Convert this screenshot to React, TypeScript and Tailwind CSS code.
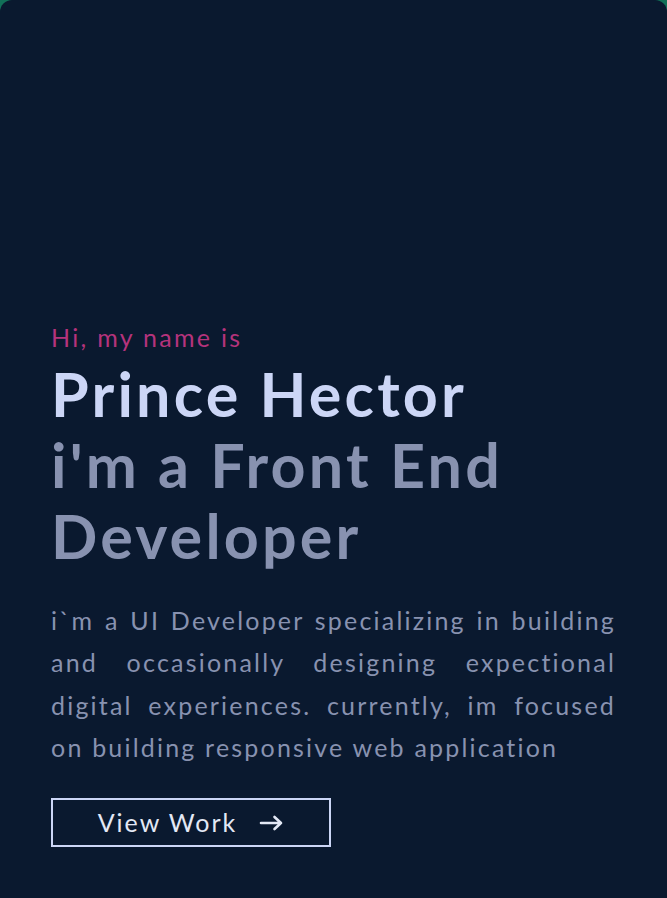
const bio = [
  "i`m a UI Developer specializing in building",
  "and occasionally designing expectional",
  "digital experiences. currently, im focused",
];

export default function App() {
  return (
    <div className="min-h-screen bg-[#127058]">
      <section
        className="min-h-screen rounded-t-[12px] bg-[#0a192f] px-[51px] pt-[320px] pb-[52px]"
        style={{ fontFamily: "Lato, 'Open Sans', sans-serif" }}
      >
        {/* Intro */}
        <p className="text-[25px] leading-[34px] tracking-[2.3px] text-[#b5337c]">Hi, my name is</p>
        <h1 className="mt-[4px] text-[61px] font-bold leading-[71px] tracking-[3.2px] text-[#ccd6f6]">
          Prince Hector
        </h1>
        <h2 className="text-[61px] font-bold leading-[71px] tracking-[3.2px] text-[#8892b0]">
          i'm a Front End
          <br />
          Developer
        </h2>

        {/* Bio */}
        <div className="mt-[28px] text-[25px] leading-[42.3px] tracking-[2.2px] text-[#8892b0]">
          {bio.map((line) => (
            <p key={line} className="text-justify [text-align-last:justify]">
              {line}
            </p>
          ))}
          <p>on building responsive web application</p>
        </div>

        {/* CTA */}
        <button className="mt-[30px] flex h-[49px] w-[280px] items-center justify-center gap-[22px] border-2 border-[#ccd6f6] text-[25px] tracking-[2px] text-[#e3e8f5]">
          View Work
          <svg width="25" height="16" viewBox="0 0 25 16" fill="none" stroke="currentColor" strokeWidth="2.6" strokeLinecap="round" strokeLinejoin="round">
            <path d="M2 8h20M15.5 2l6.5 6-6.5 6" />
          </svg>
        </button>
      </section>
    </div>
  );
}
